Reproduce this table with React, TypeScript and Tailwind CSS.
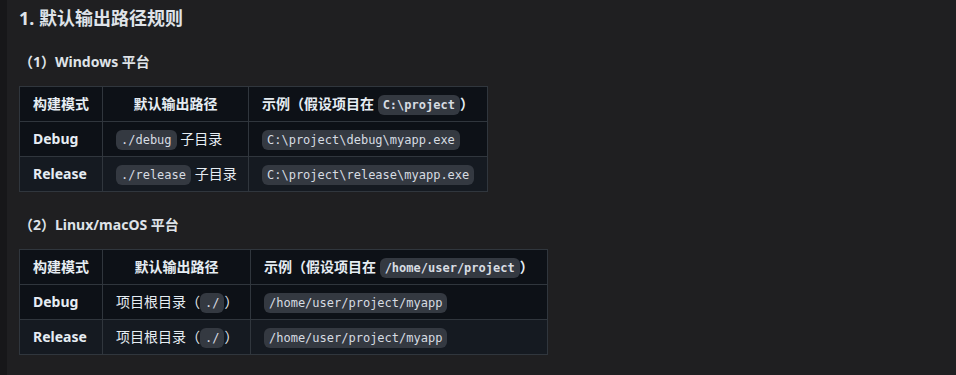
import React from 'react';

interface Row {
  mode: string;
  path: React.ReactNode;
  example: string;
}

const Code: React.FC<{ children: React.ReactNode }> = ({ children }) => (
  <code className="rounded-[6px] bg-[#343941] px-[5px] py-[3px] font-['DejaVu_Sans_Mono','Liberation_Mono',monospace] text-[12px] leading-[16px] text-[#d7dce2]">
    {children}
  </code>
);

interface PlatformTableProps {
  title: string;
  root: string;
  tableWidth: string;
  widths: [string, string, string];
  rows: Row[];
}

const PlatformTable: React.FC<PlatformTableProps> = ({ title, root, tableWidth, widths, rows }) => (
  <div>
    <h3 className="mt-[23px] text-[14px] leading-[20px] font-bold text-[#dfe3e8]">{title}</h3>
    <table className={`${tableWidth} mt-[14px] table-fixed border-collapse text-[14px] leading-[22px] text-[#e6edf3]`}>
      <thead>
        <tr className="h-[35px] bg-[#0d1117]">
          <th className={`${widths[0]} border border-[#30363d] px-[13px] py-[6px] text-left font-bold`}>构建模式</th>
          <th className={`${widths[1]} border border-[#30363d] px-[13px] py-[6px] text-center font-bold`}>默认输出路径</th>
          <th className={`${widths[2]} border border-[#30363d] px-[13px] py-[6px] text-left font-bold whitespace-nowrap`}>
            示例（假设项目在 <Code>{root}</Code>）
          </th>
        </tr>
      </thead>
      <tbody>
        {rows.map((row, i) => (
          <tr key={row.mode} className={`h-[35px] ${i % 2 === 1 ? 'bg-[#151a21]' : 'bg-[#0d1117]'}`}>
            <td className="border border-[#30363d] px-[13px] py-[6px] font-bold">{row.mode}</td>
            <td className="border border-[#30363d] px-[13px] py-[6px] whitespace-nowrap">{row.path}</td>
            <td className="border border-[#30363d] px-[13px] py-[6px] whitespace-nowrap">
              <Code>{row.example}</Code>
            </td>
          </tr>
        ))}
      </tbody>
    </table>
  </div>
);

const App: React.FC = () => {
  return (
    <div className="flex h-[375px] w-[956px] overflow-hidden bg-[#1f1f21] font-['Noto_Sans','Noto_Sans_CJK_SC',sans-serif]">
      <div className="w-[7px] shrink-0 bg-[#171719]" />
      <div className="flex-1 pl-[12px] pt-[7px]">
        <h2 className="text-[18px] leading-[22px] font-bold text-[#dfe3e8]">1. 默认输出路径规则</h2>

        <PlatformTable
          title="（1）Windows 平台"
          root="C:\project"
          tableWidth="w-[469px]"
          widths={['w-[83px]', 'w-[146px]', 'w-[239px]']}
          rows={[
            { mode: 'Debug', path: <><Code>./debug</Code> 子目录</>, example: 'C:\\project\\debug\\myapp.exe' },
            { mode: 'Release', path: <><Code>./release</Code> 子目录</>, example: 'C:\\project\\release\\myapp.exe' }
          ]}
        />

        <PlatformTable
          title="（2）Linux/macOS 平台"
          root="/home/user/project"
          tableWidth="w-[529px]"
          widths={['w-[83px]', 'w-[148px]', 'w-[297px]']}
          rows={[
            { mode: 'Debug', path: <>项目根目录（<Code>./</Code>）</>, example: '/home/user/project/myapp' },
            { mode: 'Release', path: <>项目根目录（<Code>./</Code>）</>, example: '/home/user/project/myapp' }
          ]}
        />
      </div>
    </div>
  );
};

export default App;
